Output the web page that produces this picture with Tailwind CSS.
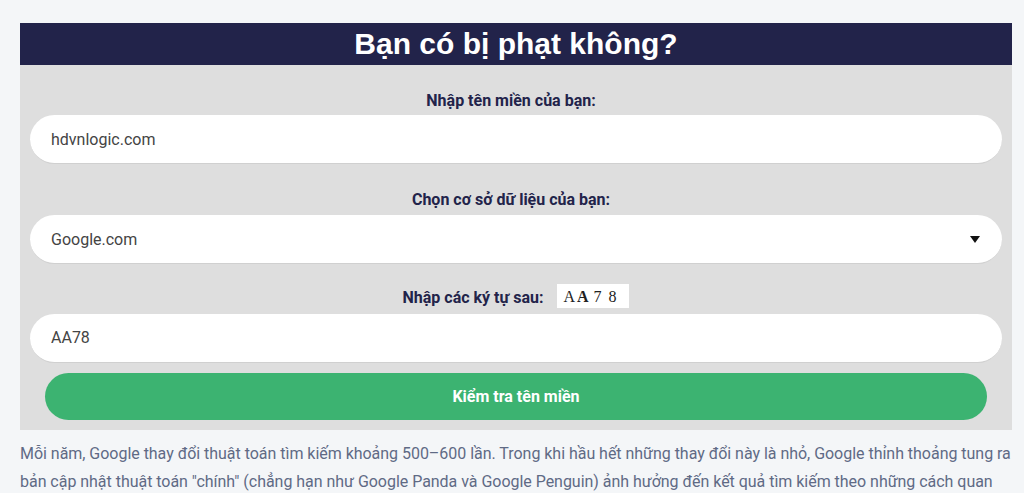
<!DOCTYPE html>
<html lang="vi">
<head>
    <meta charset="UTF-8">
    <title>Bạn có bị phạt không?</title>
    <script src="https://cdn.jsdelivr.net/npm/@tailwindcss/browser@4"></script>
</head>
<body class="h-[493px] overflow-hidden bg-[#f4f6f8] font-['Roboto',sans-serif]">
    <div class="w-[992px] ml-5 pt-[23px]">
        <!-- Heading -->
        <h2 class="h-[42px] bg-[#22234a] text-white text-center text-[30px] leading-[41px] font-bold font-['Liberation_Sans',sans-serif]">Bạn có bị phạt không?</h2>

        <!-- Form -->
        <form class="h-[365px] bg-[#dedede] px-2.5 flex flex-col items-center">
            <label class="mt-[24px] mr-[10px] h-[24px] text-[16px] leading-[24px] font-bold text-[#22234a]">Nhập tên miền của bạn:</label>
            <input type="text" value="hdvnlogic.com" class="mt-[2px] w-full h-[49px] rounded-full bg-white px-[21px] text-[16px] text-[#444] border-b border-[#d0d0d0] outline-none">

            <label class="mt-[24px] mr-[10px] h-[24px] text-[16px] leading-[24px] font-bold text-[#22234a]">Chọn cơ sở dữ liệu của bạn:</label>
            <div class="mt-[3px] w-full h-[49px] rounded-full bg-white pl-[21px] pr-[22px] pt-px flex items-center justify-between text-[16px] text-[#444] border-b border-[#d0d0d0]">
                <span>Google.com</span>
                <svg width="10" height="7" viewBox="0 0 10 7"><path d="M0 0H10L5 7Z" fill="#111"/></svg>
            </div>

            <div class="mt-[20px] h-[24px] flex items-center">
                <label class="text-[16px] font-bold text-[#22234a] pt-[3px]">Nhập các ký tự sau:</label>
                <div class="ml-[14px] w-[72px] h-[24px] bg-white pl-[6px] pt-[2px] flex text-[16px] leading-[22px] text-[#222] font-['Liberation_Serif',serif]">
                    <span>A</span><span class="ml-[2px] font-bold">A</span><span class="ml-[5px]">7</span><span class="ml-[7px]">8</span>
                </div>
            </div>
            <input type="text" value="AA78" class="mt-[6px] w-full h-[49px] rounded-full bg-white px-[21px] pb-[2px] text-[16px] text-[#444] border-b border-[#d0d0d0] outline-none">

            <button type="button" class="mt-[10px] w-[942px] h-[47px] rounded-full bg-[#3cb371] text-white text-[16px] font-bold">Kiểm tra tên miền</button>
        </form>

        <!-- Intro text -->
        <p class="mt-[10px] text-[16px] leading-[28px] tracking-[-0.03px] text-[#5f6a85] whitespace-nowrap">Mỗi năm, Google thay đổi thuật toán tìm kiếm khoảng 500–600 lần. Trong khi hầu hết những thay đổi này là nhỏ, Google thỉnh thoảng tung ra<br>bản cập nhật thuật toán "chính" (chẳng hạn như Google Panda và Google Penguin) ảnh hưởng đến kết quả tìm kiếm theo những cách quan</p>
    </div>
</body>
</html>
